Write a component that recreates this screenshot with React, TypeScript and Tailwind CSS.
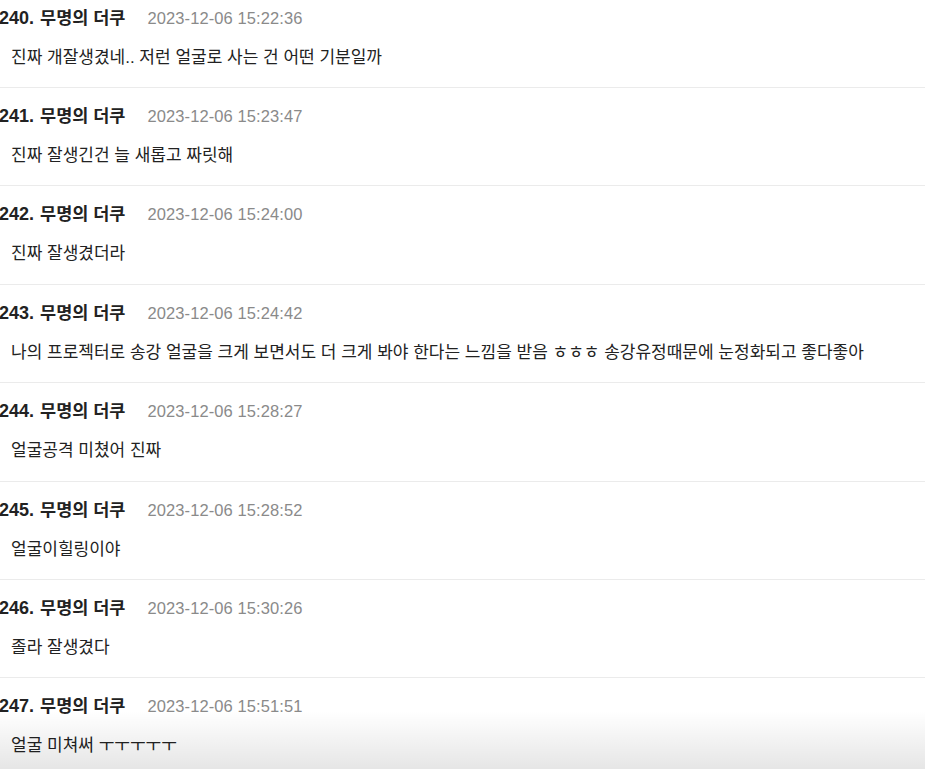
import React from "react";

interface Comment {
  no: number;
  author: string;
  time: string;
  body: string;
}

const comments: Comment[] = [
  { no: 240, author: "무명의 더쿠", time: "2023-12-06 15:22:36", body: "진짜 개잘생겼네.. 저런 얼굴로 사는 건 어떤 기분일까" },
  { no: 241, author: "무명의 더쿠", time: "2023-12-06 15:23:47", body: "진짜 잘생긴건 늘 새롭고 짜릿해" },
  { no: 242, author: "무명의 더쿠", time: "2023-12-06 15:24:00", body: "진짜 잘생겼더라" },
  {
    no: 243,
    author: "무명의 더쿠",
    time: "2023-12-06 15:24:42",
    body: "나의 프로젝터로 송강 얼굴을 크게 보면서도 더 크게 봐야 한다는 느낌을 받음 ㅎㅎㅎ 송강유정때문에 눈정화되고 좋다좋아",
  },
  { no: 244, author: "무명의 더쿠", time: "2023-12-06 15:28:27", body: "얼굴공격 미쳤어 진짜" },
  { no: 245, author: "무명의 더쿠", time: "2023-12-06 15:28:52", body: "얼굴이힐링이야" },
  { no: 246, author: "무명의 더쿠", time: "2023-12-06 15:30:26", body: "졸라 잘생겼다" },
  { no: 247, author: "무명의 더쿠", time: "2023-12-06 15:51:51", body: "얼굴 미쳐써 ㅜㅜㅜㅜㅜ" },
];

const CommentItem = ({ c }: { c: Comment }): JSX.Element => {
  return (
    <li className="border-b border-[#ebebeb] pt-[16px] pb-[17.4px]">
      <div className="flex items-center h-[24px] leading-[24px] -ml-[1px]">
        <span className="text-[18px] font-bold text-[#222]">{c.no}.</span>
        <span className="ml-[6px] text-[17.5px] font-bold text-[#222]">{c.author}</span>
        <span className="ml-[22px] text-[16.5px] text-[#8a8a8a] tracking-[0.1px]">{c.time}</span>
      </div>
      <p className="mt-[16px] h-[24px] leading-[24px] pl-[11px] text-[17px] text-[#222]">{c.body}</p>
    </li>
  );
};

export default function App(): JSX.Element {
  return (
    <div
      className="relative h-[769px] w-[925px] overflow-hidden bg-white"
      style={{ fontFamily: '"Liberation Sans", "Noto Sans CJK KR", sans-serif' }}
    >
      <ul className="-mt-[10.4px]">
        {comments.map((c) => (
          <CommentItem c={c} key={c.no} />
        ))}
      </ul>
      {/* fade at the bottom */}
      <div className="pointer-events-none absolute bottom-0 left-0 right-0 h-[58px] bg-linear-to-b from-black/0 to-black/10" />
    </div>
  );
}
